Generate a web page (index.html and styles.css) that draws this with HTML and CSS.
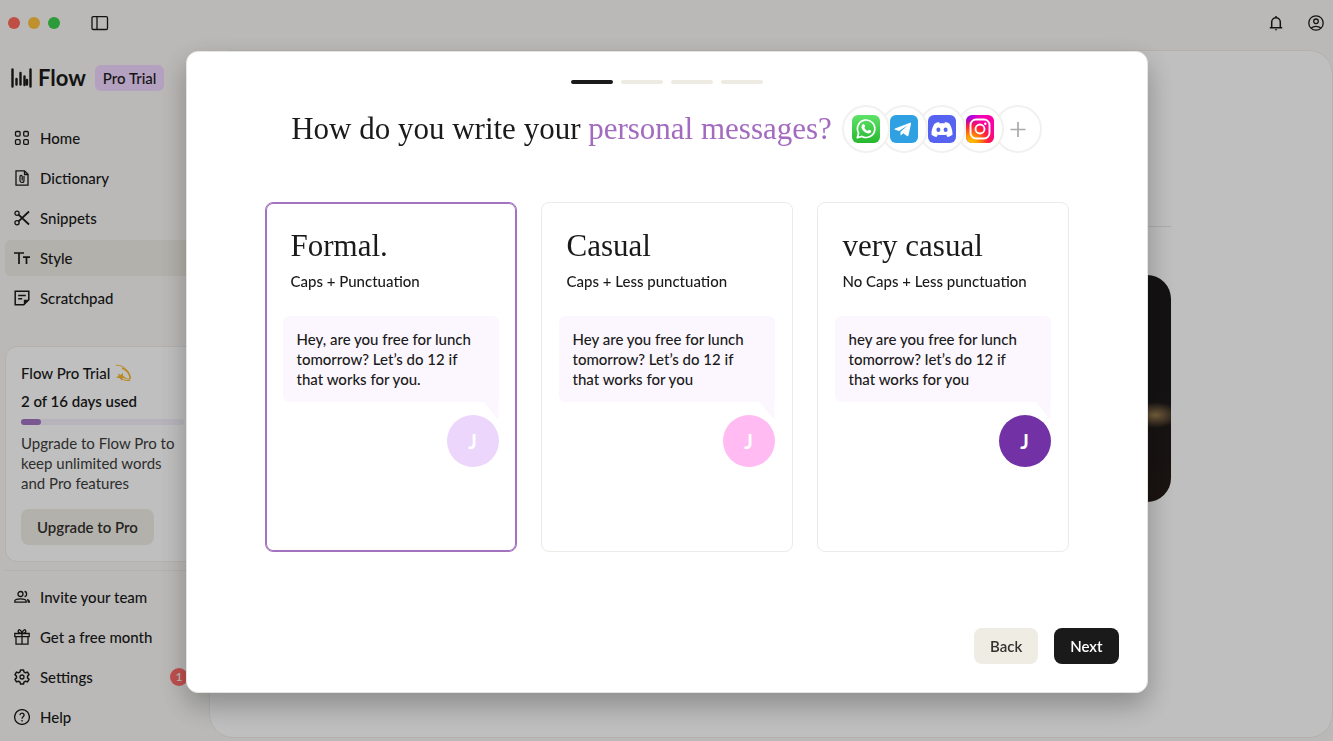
FILE: index.html
```html
<!DOCTYPE html>
<html lang="en">
<head>
<meta charset="utf-8">
<meta name="viewport" content="width=device-width, initial-scale=1">
<title>Flow</title>
<link rel="stylesheet" href="styles.css">
</head>
<body>
<div class="app">
  <header class="topbar">
    <div class="lights"><span class="light light-close"></span><span class="light light-min"></span><span class="light light-max"></span></div>
    <button class="icon-button" aria-label="Toggle sidebar"><svg class="icon-panel" viewBox="0 0 18 16"><rect x="1" y="1.700" width="15.500" height="12.800" rx="1.200"/><path d="M6 1.700v12.800"/></svg></button>
    <div class="topbar-end">
      <button class="icon-button" aria-label="Notifications"><svg class="icon" viewBox="0 0 16 16"><path d="M1.800 12.800h12.400M3.700 12.500V7a4.300 4.300 0 0 1 8.600 0v5.500M8 2.500V1" stroke-width="1.500"/><path d="M6.600 14.300h2.800L8 15.800z" fill="currentColor" stroke="none"/></svg></button>
      <button class="icon-button" aria-label="Account"><svg class="icon" viewBox="0 0 16 16"><circle cx="8" cy="8" r="7.200"/><circle cx="8" cy="6.300" r="2.300"/><path d="M3.200 13c2.600-2.300 7-2.300 9.600 0"/></svg></button>
    </div>
  </header>

  <aside class="sidebar">
    <div class="brand">
      <svg class="brand-mark" viewBox="0 0 21 20"><path d="M1.500 1.500v17M5.500 12v4.500M9.500 5v11.500M13.500 8.500V17M5.500 11v5.500M16 12v4.500M19.500 1.500v17"/></svg>
      <span class="brand-name">Flow</span>
      <span class="plan">Pro Trial</span>
    </div>
    <nav class="nav">
      <a class="nav-item" href="#home"><svg class="icon" viewBox="0 0 16 16"><rect x="1.500" y="1.500" width="4.600" height="4.600" rx="1"/><rect x="9.700" y="1.500" width="4.600" height="4.600" rx="1"/><rect x="1.500" y="9.700" width="4.600" height="4.600" rx="1"/><rect x="9.700" y="9.700" width="4.600" height="4.600" rx="1"/></svg>Home</a>
      <a class="nav-item" href="#dictionary"><svg class="icon" viewBox="0 0 16 16"><path d="M2 .8h8.500L14 4.300v10.900H2zM10.500 1v3.500H14"/><path d="M10 6v4.500a2 2 0 0 1-4 0V6.500a1.100 1.100 0 0 1 2.200 0v4" stroke-width="1.200"/></svg>Dictionary</a>
      <a class="nav-item" href="#snippets"><svg class="icon" viewBox="0 0 16 16"><circle cx="3" cy="3.200" r="2.100"/><circle cx="3" cy="12.800" r="2.100"/><path d="M4.500 4.600 15 14.500M4.500 11.400 15 1.500" stroke-width="1.800"/></svg>Snippets</a>
      <a class="nav-item nav-item-active" href="#style" aria-current="page"><svg class="icon" viewBox="0 0 16 16"><path d="M0 3h10M5 3v11M9 7.200h7M12.500 7.200V14" stroke-width="1.700"/></svg>Style</a>
      <a class="nav-item" href="#scratchpad"><svg class="icon" viewBox="0 0 16 16"><path d="M1.200 1.200h13.600v8.600l-5 5H1.200z" stroke-width="1.500"/><path d="M4.200 5.500h7.600M4.200 8.700h4" stroke-width="1.400"/><path d="M9.800 9.800h5l-5 5z" fill="currentColor" stroke="none"/></svg>Scratchpad</a>
    </nav>

    <section class="trial">
      <h2 class="trial-title">Flow Pro Trial <svg class="dizzy" viewBox="0 0 20 20"><path d="M2 1.500c8-1 15.500 6 16.300 15" stroke-width="1"/><path d="M9 4.500c5 2 8.500 6 9 12" stroke-width="1.700"/><path d="M18 18c-5 1-10-1-14-4.500M17.500 17c-5-.5-7-2-9-4.500"/><path d="m2 15 3.500-1.500L4 10.500l3.500 1.700L10 10v3.500l3.500 1.500-3.800.5-1.400 3-1.500-3z" fill="currentColor" stroke="none"/></svg></h2>
      <p class="trial-days">2 of 16 days used</p>
      <div class="meter"><span class="meter-fill" style="width: 12.5%"></span></div>
      <p class="trial-text">Upgrade to Flow Pro to keep unlimited words and Pro features</p>
      <button class="button button-soft">Upgrade to Pro</button>
    </section>

    <nav class="nav nav-footer">
      <a class="nav-item" href="#invite"><svg class="icon" viewBox="0 0 16 16"><circle cx="6.500" cy="5" r="2.500"/><path d="M.8 13.200v-1c0-3.200 11.400-3.200 11.400 0v1zM10.500 2.500c2.800 0 2.800 5 0 5"/><path d="M13 9.800c2 .5 3 1.300 3 4h-2.200z" fill="currentColor" stroke="none"/></svg>Invite your team</a>
      <a class="nav-item" href="#gift"><svg class="icon" viewBox="0 0 16 16"><path d="M.8 4.500h14.400v3.200H.8zM2 7.700v7.500h12V7.700M8 4.500v10.700M8 4.300C2.500 4.500 4 .3 5.700.8 7 1.200 7.600 2.600 8 4.300c.4-1.700 1-3.100 2.300-3.500 1.700-.5 3.200 3.700-2.300 3.500"/></svg>Get a free month</a>
      <a class="nav-item" href="#settings"><svg class="icon" viewBox="0 0 16 16"><path d="m6.500.9-.4 2-1.600.9-2-.7L1 5.700l1.500 1.400v1.800L1 10.300l1.500 2.600 2-.7 1.600.9.400 2h3l.4-2 1.600-.9 2 .7 1.500-2.600-1.500-1.400V7.100L15 5.700l-1.500-2.600-2 .7-1.600-.9-.4-2z" stroke-width="1.500" stroke-linejoin="round"/><circle cx="8" cy="8" r="2"/></svg>Settings<span class="count">1</span></a>
      <a class="nav-item" href="#help"><svg class="icon" viewBox="0 0 16 16"><circle cx="8" cy="8" r="7.400"/><path d="M5.900 6.100c.2-2.600 4.300-2.500 4.200 0C10 7.700 8 7.700 8 9.700M8 11v1.500"/></svg>Help</a>
    </nav>
  </aside>

  <main class="page">
    <div class="page-column">
      <hr class="rule">
      <div class="banner"></div>
    </div>
  </main>
</div>

<div class="overlay">
  <section class="modal" role="dialog" aria-modal="true" aria-labelledby="question">
    <div class="steps"><span class="step step-current"></span><span class="step"></span><span class="step"></span><span class="step"></span></div>
    <div class="question-row">
      <h1 class="question" id="question">How do you write your <span class="accent">personal messages?</span></h1>
      <div class="apps">
        <span class="app-ring"><svg viewBox="0 0 28 28"><defs><linearGradient id="wa" x2="0" y2="1"><stop stop-color="#5fe36a"/><stop offset="1" stop-color="#26b82f"/></linearGradient></defs><rect width="28" height="28" rx="6" fill="url(#wa)"/><path d="m5.300 22.800 1.300-4.700a8.700 8.700 0 1 1 3.400 3.300z" fill="none" stroke="#fff" stroke-width="1.700" stroke-linejoin="round"/><path d="M10.800 9.200c.7-.6 1.400-.3 1.700.5l.6 1.500c.2.500-.8 1.200-.7 1.600.6 1.400 1.700 2.300 3 2.900.5.200 1.100-1.200 1.600-1l1.900.9c.7.400.1 2-.7 2.500-2 1.200-4.800-.1-6.600-2-2.200-2.300-3-5.200-.8-6.900z" fill="#fff"/></svg></span>
        <span class="app-ring"><svg viewBox="0 0 28 28"><rect width="28" height="28" rx="6" fill="#2fa1e2"/><path d="M5 13.500 20 7.700c.7-.2 1.200.2 1 1l-2.500 11.600c-.2.900-.7 1.100-1.500.7l-3.800-2.800-1.900 1.800c-.4.400-.8.300-.8-.3l.1-3 6.900-6.200-8.500 5.400-3.800-1.200c-.8-.3-.8-.8-.2-1.200z" fill="#fff"/></svg></span>
        <span class="app-ring"><svg viewBox="0 0 28 28"><rect width="28" height="28" rx="6" fill="#5662f0"/><path d="m11.500 7-.6 1.200h6.200L16.500 7c2 .3 3.500.8 5 1.700 2 3.300 3.200 6.800 3 11-1.700 1.300-3.300 2-5 2.300l-1.300-2 1.600-.8c-3.500 1.200-8 1.200-11.600 0l1.600.8-1.300 2c-1.800-.3-3.400-1-5-2.300-.2-4.200.9-7.700 3-11C8 7.800 9.600 7.300 11.500 7z" fill="#fff"/><ellipse cx="10.400" cy="14.800" rx="2" ry="2.200" fill="#5662f0"/><ellipse cx="17.600" cy="14.800" rx="2" ry="2.200" fill="#5662f0"/></svg></span>
        <span class="app-ring"><svg viewBox="0 0 28 28"><defs><linearGradient id="iga" x2="1" y2="0"><stop stop-color="#7d00ff"/><stop offset=".5" stop-color="#f400b5"/><stop offset="1" stop-color="#ff00a0"/></linearGradient><radialGradient id="igb" cx=".15" cy="1.050" r="1"><stop stop-color="#ffd500"/><stop offset=".3" stop-color="#ff9800"/><stop offset=".65" stop-color="#ff2038"/><stop offset="1" stop-color="#ff0070" stop-opacity="0"/></radialGradient></defs><rect width="28" height="28" rx="6" fill="url(#iga)"/><rect width="28" height="28" rx="6" fill="url(#igb)"/><rect x="4.500" y="4.500" width="19" height="19" rx="5.500" fill="none" stroke="#fff" stroke-width="1.900"/><circle cx="14" cy="14" r="4.500" fill="none" stroke="#fff" stroke-width="1.900"/><circle cx="19.300" cy="8.700" r="1.200" fill="#fff"/></svg></span>
        <button class="app-ring app-add" aria-label="Add app"><svg viewBox="0 0 28 28"><path d="M14 7v15M6.500 14.500h15" fill="none" stroke="#aaa" stroke-width="1.700"/></svg></button>
      </div>
    </div>

    <div class="cards">
      <button class="card card-selected" aria-pressed="true">
        <span class="card-title">Formal.</span>
        <span class="card-note">Caps + Punctuation</span>
        <span class="bubble">Hey, are you free for lunch tomorrow? Let’s do 12 if that&nbsp;works for you.</span>
        <span class="avatar avatar-lilac">J</span>
      </button>
      <button class="card" aria-pressed="false">
        <span class="card-title">Casual</span>
        <span class="card-note">Caps + Less punctuation</span>
        <span class="bubble">Hey are you free for lunch tomorrow? Let’s do 12 if that&nbsp;works for you</span>
        <span class="avatar avatar-pink">J</span>
      </button>
      <button class="card" aria-pressed="false">
        <span class="card-title">very casual</span>
        <span class="card-note">No Caps + Less punctuation</span>
        <span class="bubble">hey are you free for lunch tomorrow? let’s do 12 if that&nbsp;works for you</span>
        <span class="avatar avatar-purple">J</span>
      </button>
    </div>

    <footer class="actions">
      <button class="button button-soft">Back</button>
      <button class="button button-dark">Next</button>
    </footer>
  </section>
</div>
</body>
</html>
```

FILE: styles.css
```css
* { box-sizing: border-box; }

body {
  margin: 0;
  background: #f8f7f5;
  color: #1a1a1a;
  font: 500 15px/20px Lato, "Open Sans", sans-serif;
}

h1, h2, p { margin: 0; font: inherit; }
button { font: inherit; color: inherit; border: 0; cursor: pointer; }
a { color: inherit; text-decoration: none; }

.app {
  display: grid;
  grid-template: 50px 1fr / 209px 1fr;
  min-height: 100vh;
}

.icon, .icon-panel {
  flex: none;
  width: 16px;
  height: 16px;
  fill: none;
  stroke: currentColor;
  stroke-width: 1.3;
}
.icon-panel { width: 18px; }

/* Top bar */
.topbar {
  grid-column: 1 / -1;
  display: flex;
  align-items: center;
  height: 46px;
  padding: 0 9px 0 8px;
}
.lights { display: flex; gap: 8px; margin-right: 31px; }
.light { width: 12px; height: 12px; border-radius: 50%; }
.light-close { background: #ff6a5d; }
.light-min { background: #ffc23e; }
.light-max { background: #3ccf4e; }
.icon-button { display: flex; padding: 0; background: none; }
.topbar-end { display: flex; gap: 24px; margin-left: auto; }

/* Sidebar */
.sidebar { padding: 15px 9px 6px 5px; }
.brand { display: flex; align-items: center; height: 26px; padding-left: 6px; }
.brand-mark { width: 21px; height: 20px; fill: none; stroke: currentColor; stroke-width: 2.4; stroke-linecap: round; }
.brand-name { margin: 0 9px 0 6px; font-size: 22px; font-weight: 700; }
.plan { padding: 3px 8px; border-radius: 6px; background: #f0d7ff; }

.nav { display: grid; gap: 4px; margin-top: 29px; }
.nav-item {
  display: flex;
  align-items: center;
  gap: 10px;
  height: 36px;
  padding: 0 12px 0 9px;
  border-radius: 6px;
}
.nav-item-active { background: #eeece4; }
.nav-footer { margin-top: 8px; padding-top: 8px; border-top: 1px solid #eeece6; }
.count {
  width: 18px;
  margin-left: auto;
  border-radius: 9px;
  background: #ff6b68;
  color: #fff;
  font-size: 12px;
  line-height: 18px;
  text-align: center;
}

.trial {
  display: grid;
  gap: 8px;
  justify-items: start;
  margin-top: 30px;
  padding: 16px 15px;
  border: 1px solid #efede7;
  border-radius: 12px;
  background: #fff;
}
.trial-title { display: flex; align-items: center; gap: 4px; }
.dizzy { width: 18px; height: 18px; fill: none; stroke: currentColor; stroke-width: 1.2; color: #f5b82e; }
.trial-days { font-weight: 600; }
.meter { width: 100%; height: 6px; border-radius: 3px; background: #f5effb; }
.meter-fill { display: block; height: 6px; border-radius: 3px; background: #a373c4; }
.trial-text { color: #3c3c3a; font-weight: 400; }
.trial .button { margin-top: 8px; }

.button { height: 36px; padding: 0 16px; border-radius: 8px; font-weight: 600; }
.button-soft { background: #efece4; color: #33322e; }
.button-dark { background: #1a1a1a; color: #fff; }

/* Page behind the dialog */
.page {
  margin-bottom: 3px;
  padding: 175px 32px 0;
  border: 1px solid #efede7;
  border-radius: 24px;
  background: #fff;
}
.page-column { max-width: 800px; margin: 0 auto; }
.rule { margin: 0; border: 0; border-top: 1px solid #e8e6e0; }
.banner {
  height: 227px;
  margin-top: 48px;
  border-radius: 24px;
  background:
    radial-gradient(ellipse 24px 13px at 98% 140px, #a08052, transparent),
    linear-gradient(#1b191a 50%, #241a17);
}

/* Dialog */
.overlay {
  position: fixed;
  inset: 0;
  display: flex;
  align-items: center;
  justify-content: center;
  padding-top: 3px;
  background: rgb(0 0 0 / 25%);
}
.modal {
  display: flex;
  flex-direction: column;
  width: 962px;
  min-height: 642px;
  padding: 28px;
  border: 1px solid #e4e4e2;
  border-radius: 12px;
  background: #fff;
  box-shadow: 0 12px 28px rgb(0 0 0 / 28%);
}
.steps { display: flex; justify-content: center; gap: 8px; }
.step { width: 42px; height: 4px; border-radius: 2px; background: #eeece2; }
.step-current { background: #1a1a1a; }

.question-row { display: flex; align-items: center; justify-content: center; gap: 10px; margin-top: 21px; }
.question { font: 400 31px/40px "Liberation Serif", serif; }
.accent { color: #a36bbf; }
.apps { display: flex; isolation: isolate; }
.app-ring {
  position: relative;
  display: grid;
  place-items: center;
  width: 48px;
  height: 48px;
  padding: 0;
  border: 2px solid #f1f1f0;
  border-radius: 50%;
  background: #fff;
}
.app-ring + .app-ring { margin-left: -10px; }
.app-ring svg { width: 28px; height: 28px; }
.app-ring:nth-child(1) { z-index: 5; }
.app-ring:nth-child(2) { z-index: 4; }
.app-ring:nth-child(3) { z-index: 3; }
.app-ring:nth-child(4) { z-index: 2; }

.cards { display: grid; grid-template-columns: repeat(3, 252px); justify-content: center; gap: 24px; margin-top: 49px; }
.card {
  display: flex;
  flex-direction: column;
  justify-content: flex-start;
  min-height: 350px;
  padding: 23px 17px;
  border: 1px solid #ecebe7;
  border-radius: 8px;
  background: #fff;
  text-align: left;
}
.card-selected { border-color: #a373bf; box-shadow: inset 0 0 0 1px #a373bf; }
.card-title { padding: 0 8px; font: 400 31px/40px "Liberation Serif", serif; }
.card-note { margin-top: 5px; padding: 0 8px; }
.bubble {
  position: relative;
  margin-top: 25px;
  padding: 13px 14px;
  border-radius: 6px 6px 0 6px;
  background: #fcf7fe;
}
.bubble::after {
  content: "";
  position: absolute;
  top: 100%;
  right: 0;
  width: 15px;
  height: 18px;
  background: #fcf7fe;
  clip-path: polygon(0 0, 100% 0, 100% 100%);
}
.avatar {
  position: relative;
  align-self: flex-end;
  width: 52px;
  height: 52px;
  margin-top: 13px;
  border-radius: 50%;
  color: #fff;
  font-size: 20px;
  font-weight: 700;
  line-height: 52px;
  text-align: center;
}
.avatar-lilac { background: #ecd6fc; }
.avatar-pink { background: #ffbbf2; }
.avatar-purple { background: #7232a5; }

.actions { display: flex; justify-content: flex-end; gap: 16px; margin-top: auto; }
```
